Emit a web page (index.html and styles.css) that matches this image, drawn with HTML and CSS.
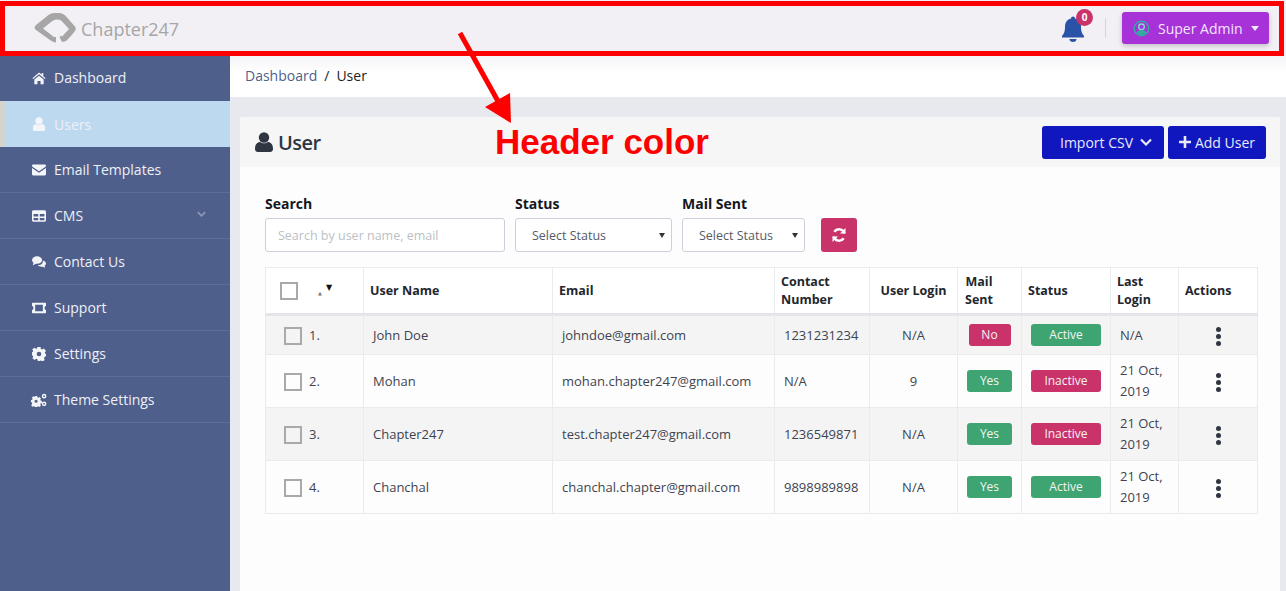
FILE: index.html
```html
<!doctype html>
<html lang="en">
    <head>
        <meta charset="UTF-8" />
        <title>Chapter247 - Users</title>
        <link rel="stylesheet" href="styles.css">
    </head>
    <body>
        <svg class="defs" width="0" height="0">
            <symbol id="i-user" viewBox="0 0 18 20"><circle cx="9" cy="5.5" r="5.2"/><path d="M0 17c0-5 2.5-7 5-7 1.2.8 2.5 1.3 4 1.3s2.800-.5 4-1.300c2.500 0 5 2 5 7 0 2-1.300 3-3 3H3c-1.700 0-3-1-3-3z"/></symbol>
            <symbol id="i-sort" viewBox="0 0 16 16"><path d="M4 15V2M1.500 4.500 4 1.500l2.500 3" class="up"/><path d="M12 1v13M9.500 11.500l2.500 3 2.500-3" class="down"/></symbol>
            <symbol id="i-refresh" viewBox="0 0 16 16"><path d="M13.500 6.500A5.700 5.700 0 0 0 3.300 4.800" fill="none" stroke="currentColor" stroke-width="2.400"/><path d="M14.500 1v5.500H9z"/><path d="M2.500 9.500a5.700 5.700 0 0 0 10.200 1.700" fill="none" stroke="currentColor" stroke-width="2.400"/><path d="M1.500 15V9.500H7z"/></symbol>
        </svg>

        <header class="topbar">
            <div class="logo">
                <svg class="logo-mark" viewBox="0 0 46 36"><path d="M30 31c4 0 6-3 9-6l4-5c1-1.500 1-3 0-4.500l-8-9c-3-3.500-5-4.500-9-4.500h-3c-4 0-6 1.500-9 4l-10 8c-2 2-2 3.500 0 5l14 10c2 1.500 4 2.500 6 2.500v-5.500c-1.500 0-3-.5-4-1.500l-9-7 8-6.500c2-1.500 3.500-2.500 6-2.500 3 0 4.500 1 6.500 3.500l5.500 6-6 6.500c-1 1-1.500 1-2 .5-1-.5-1.500 .5-1 2z"/></svg>
                <span>Chapter247</span>
            </div>
            <div class="top-right">
                <div class="bell">
                    <svg viewBox="0 0 24 27" width="24" height="27"><path d="M12 1.500c1.200 0 2 .8 2 2 4 1 6 4 6 8 0 5 1 7 3 9.500v1.500H1V21c2-2.500 3-4.500 3-9.500 0-4 2-7 6-8 0-1.200.8-2 2-2z"/><path d="M8.500 24h7c0 2-1.500 3-3.500 3s-3.500-1-3.500-3z"/></svg>
                    <span class="bell-count">0</span>
                </div>
                <div class="top-sep"></div>
                <button class="admin-btn">
                    <svg viewBox="0 0 18 18" width="17" height="17"><circle cx="9" cy="9" r="8.400" fill="#2fae9f"/><circle cx="9" cy="9" r="7" fill="#a632d8"/><circle cx="9" cy="7.200" r="3" fill="none" stroke="#7fe3cf" stroke-width="1.400"/><path d="M3.500 14c1-2.800 3-3.500 5.500-3.500s4.500.7 5.500 3.500L9 16.500z" fill="#2fae9f"/></svg>
                    <span>Super Admin</span>
                    <i class="caret"></i>
                </button>
            </div>
        </header>

        <div class="layout">
            <nav class="sidebar">
                <a class="nav-item">
                    <svg class="nav-icon" viewBox="0 0 18 16"><path d="M9 1 0.500 8.200l1 1.200L9 3.200l7.500 6.200 1-1.200-3-2.500V1.500h-2v2.100z"/><path d="M3 10 9 5l6 5v6h-4v-4H7v4H3z"/></svg>
                    Dashboard
                </a>
                <a class="nav-item active">
                    <svg class="nav-icon" viewBox="0 0 18 20"><use href="#i-user"/></svg>
                    Users
                </a>
                <a class="nav-item">
                    <svg class="nav-icon" viewBox="0 0 18 14"><path d="M1.500 0h15C17.300 0 18 .7 18 1.500c0 .8-.5 1.300-1 1.700L9 8.500 1 3.200C.5 2.800 0 2.300 0 1.500 0 .7.700 0 1.500 0z"/><path d="M0 4.500 9 10.500l9-6V12.500c0 .8-.7 1.500-1.500 1.500h-15C.7 14 0 13.300 0 12.500z"/></svg>
                    Email Templates
                </a>
                <a class="nav-item">
                    <svg class="nav-icon" viewBox="0 0 18 15"><path fill-rule="evenodd" d="M2 0h14c1.100 0 2 .9 2 2v11c0 1.100-.9 2-2 2H2c-1.100 0-2-.9-2-2V2C0 .9.900 0 2 0zM2 5v3h6V5zm8 0v3h6V5zM2 10v3h6v-3zm8 0v3h6v-3z"/></svg>
                    CMS
                    <svg class="nav-chevron" viewBox="0 0 10 6"><path d="M1 1l4 4 4-4" fill="none" stroke="currentColor" stroke-width="2"/></svg>
                </a>
                <a class="nav-item">
                    <svg class="nav-icon" viewBox="0 0 18 15"><ellipse cx="6.500" cy="5" rx="6.500" ry="4.800"/><path d="M2 8 1 12l5-3z"/><path d="M14 5.500c2.500.8 4 2.300 4 4 0 1.200-.7 2.300-1.800 3l.8 2.500-3.500-1.500c-2.500.3-5-.5-6-2 4 0 7-2 6.500-6z"/></svg>
                    Contact Us
                </a>
                <a class="nav-item">
                    <svg class="nav-icon" viewBox="0 0 20 15"><path fill-rule="evenodd" d="M1 0h18c.6 0 1 .4 1 1v3.500c-1.200 0-2 1.300-2 3s.8 3 2 3V14c0 .6-.4 1-1 1H1c-.6 0-1-.4-1-1v-3.500c1.200 0 2-1.300 2-3s-.8-3-2-3V1c0-.6.400-1 1-1zm3.500 3v9h11V3z"/></svg>
                    Support
                </a>
                <a class="nav-item">
                    <svg class="nav-icon" viewBox="0 0 18 18"><path fill-rule="evenodd" d="M7 0h4l.5 2.600 1.600.7L15.400 2l2.600 3-1.600 2 .4 1.400 1.200.6v3l-2 .9-.6 1.500 1 2.200-3 2-1.800-1.400-1.600.5L10.500 18h-3l-.6-2.300-1.600-.5L3.500 16.600l-3-2 1-2.200-.6-1.500-1.900-.9V7l2-.6.400-1.400L.400 3 3 1l2.200 1.300 1.300-.7zM9 6a3 3 0 1 0 0 6 3 3 0 0 0 0-6z"/></svg>
                    Settings
                </a>
                <a class="nav-item">
                    <svg class="nav-icon wide" viewBox="0 0 22 17"><path fill-rule="evenodd" d="M5.500 3h3l.4 1.700 1.300.6 1.600-.8 1.900 2-1 1.500.5 1.300 1.800.5v3l-1.800.4-.5 1.300 1 1.500-1.900 2-1.600-.9-1.300.5-.4 1.400h-3l-.4-1.500-1.300-.5-1.600.9-2-2 1-1.500L1.700 12 0 11.600v-3l1.700-.5.500-1.300-1-1.500 2-2 1.600.8 1.300-.6zM7 8a2.200 2.200 0 1 0 0 4.400A2.200 2.200 0 0 0 7 8z"/><path fill-rule="evenodd" d="M18 0a3.200 3.200 0 1 1 0 6.400A3.200 3.200 0 0 1 18 0zm0 2a1.200 1.200 0 1 0 0 2.400A1.200 1.200 0 0 0 18 2zM18 10.600a3.200 3.200 0 1 1 0 6.400 3.200 3.200 0 0 1 0-6.400zm0 2a1.200 1.200 0 1 0 0 2.400 1.200 1.200 0 0 0 0-2.400z"/></svg>
                    Theme Settings
                </a>
            </nav>

            <main class="content">
                <div class="breadcrumb">
                    <a>Dashboard</a>
                    <span class="crumb-sep">/</span>
                    <span>User</span>
                </div>

                <section class="card">
                    <div class="card-head">
                        <h2 class="card-title">
                            <svg viewBox="0 0 18 20" width="18" height="20"><use href="#i-user"/></svg>
                            User
                        </h2>
                        <div class="card-actions">
                            <button class="btn-blue import-btn">
                                Import CSV
                                <svg viewBox="0 0 12 8" width="12" height="8"><path d="M1 1.500l5 5 5-5" fill="none" stroke="currentColor" stroke-width="2.200"/></svg>
                            </button>
                            <button class="btn-blue add-btn">
                                <svg viewBox="0 0 12 12" width="12" height="12"><path d="M6 0v12M0 6h12" stroke="currentColor" stroke-width="2.600"/></svg>
                                Add User
                            </button>
                        </div>
                    </div>

                    <div class="card-body">
                        <div class="filters">
                            <div class="field field-search">
                                <label>Search</label>
                                <input type="text" placeholder="Search by user name, email">
                            </div>
                            <div class="field field-status">
                                <label>Status</label>
                                <div class="select">Select Status</div>
                            </div>
                            <div class="field field-mail">
                                <label>Mail Sent</label>
                                <div class="select">Select Status</div>
                            </div>
                            <button class="refresh-btn">
                                <svg viewBox="0 0 16 16" width="16" height="16"><use href="#i-refresh"/></svg>
                            </button>
                        </div>

                        <table class="users">
                            <colgroup>
                                <col class="c-check"><col class="c-name"><col class="c-email"><col class="c-phone"><col class="c-login"><col class="c-mail"><col class="c-status"><col class="c-last"><col class="c-actions">
                            </colgroup>
                            <thead>
                                <tr>
                                    <th class="th-check"><span class="checkbox"></span><span class="sort-a">▲</span><span class="sort-b">▼</span></th>
                                    <th><div class="th-in">User Name<svg class="sort warm"><use href="#i-sort"/></svg></div></th>
                                    <th><div class="th-in">Email<svg class="sort warm"><use href="#i-sort"/></svg></div></th>
                                    <th><div class="th-in">Contact Number<svg class="sort cool"><use href="#i-sort"/></svg></div></th>
                                    <th class="th-center">User Login</th>
                                    <th><div class="th-in th-mail"><span>Mail Sent</span><svg class="sort cool"><use href="#i-sort"/></svg></div></th>
                                    <th><div class="th-in">Status<svg class="sort warm"><use href="#i-sort"/></svg></div></th>
                                    <th><div class="th-in">Last Login<svg class="sort warm"><use href="#i-sort"/></svg></div></th>
                                    <th>Actions</th>
                                </tr>
                            </thead>
                            <tbody>
                                <tr class="row-short">
                                    <td class="td-check"><span class="checkbox"></span><span>1.</span></td>
                                    <td class="td-pad">John Doe</td>
                                    <td class="td-pad">johndoe@gmail.com</td>
                                    <td class="td-pad">1231231234</td>
                                    <td class="td-center">N/A</td>
                                    <td class="td-center"><span class="tag tag-red tag-mail">No</span></td>
                                    <td class="td-center"><span class="tag tag-green tag-status">Active</span></td>
                                    <td class="td-last">N/A</td>
                                    <td class="td-center"><span class="dots"><i></i><i></i><i></i></span></td>
                                </tr>
                                <tr>
                                    <td class="td-check"><span class="checkbox"></span><span>2.</span></td>
                                    <td class="td-pad">Mohan</td>
                                    <td class="td-pad">mohan.chapter247@gmail.com</td>
                                    <td class="td-pad">N/A</td>
                                    <td class="td-center">9</td>
                                    <td class="td-center"><span class="tag tag-green tag-mail">Yes</span></td>
                                    <td class="td-center"><span class="tag tag-red tag-status">Inactive</span></td>
                                    <td class="td-last">21 Oct, 2019</td>
                                    <td class="td-center"><span class="dots"><i></i><i></i><i></i></span></td>
                                </tr>
                                <tr>
                                    <td class="td-check"><span class="checkbox"></span><span>3.</span></td>
                                    <td class="td-pad">Chapter247</td>
                                    <td class="td-pad">test.chapter247@gmail.com</td>
                                    <td class="td-pad">1236549871</td>
                                    <td class="td-center">N/A</td>
                                    <td class="td-center"><span class="tag tag-green tag-mail">Yes</span></td>
                                    <td class="td-center"><span class="tag tag-red tag-status">Inactive</span></td>
                                    <td class="td-last">21 Oct, 2019</td>
                                    <td class="td-center"><span class="dots"><i></i><i></i><i></i></span></td>
                                </tr>
                                <tr>
                                    <td class="td-check"><span class="checkbox"></span><span>4.</span></td>
                                    <td class="td-pad">Chanchal</td>
                                    <td class="td-pad">chanchal.chapter@gmail.com</td>
                                    <td class="td-pad">9898989898</td>
                                    <td class="td-center">N/A</td>
                                    <td class="td-center"><span class="tag tag-green tag-mail">Yes</span></td>
                                    <td class="td-center"><span class="tag tag-green tag-status">Active</span></td>
                                    <td class="td-last">21 Oct, 2019</td>
                                    <td class="td-center"><span class="dots"><i></i><i></i><i></i></span></td>
                                </tr>
                            </tbody>
                        </table>
                    </div>
                </section>
            </main>
        </div>

        <!-- red markup drawn on top of the screenshot -->
        <div class="mark-box"></div>
        <svg class="mark-arrow" viewBox="0 0 70 100" width="70" height="100"><path d="M3 2 42 72" stroke="#ff0000" stroke-width="5"/><path d="M53 62 54 92 28 76z" fill="#ff0000"/></svg>
        <div class="mark-text">Header color</div>
    </body>
</html>
```

FILE: styles.css
```css
:root {
    --side-blue: #4e5f8c;
    --side-line: #5d6d98;
    --brand-blue: #1017bf;
    --tag-red: #c9336a;
    --tag-green: #3ea572;
    --line: #e9ebef;
    --text: #3d4450;
}

* {
    margin: 0;
    padding: 0;
    box-sizing: border-box;
}

html, body {
    height: 100%;
    overflow: hidden;
}

body {
    position: relative;
    display: flex;
    flex-direction: column;
    font-family: "Open Sans", sans-serif;
    font-size: 14px;
    color: var(--text);
    background: #e8e9ee;
}

button {
    font-family: inherit;
    border: 0;
}

.defs {
    position: absolute;
}

/* top bar */
.topbar {
    flex: 0 0 56px;
    display: flex;
    align-items: center;
    justify-content: space-between;
    padding: 0 17px 0 32px;
    background: #f2f0f5;
}

.logo {
    display: flex;
    align-items: center;
    gap: 3px;
    font-size: 18px;
    color: #a6a6a6;
    margin-top: 1px;
}

.logo-mark {
    width: 46px;
    height: 36px;
    fill: #a6a6a6;
}

.top-right {
    display: flex;
    align-items: center;
}

.bell {
    position: relative;
    width: 24px;
    height: 27px;
    margin-right: 20px;
    fill: #2a53a8;
}

.bell-count {
    position: absolute;
    top: -6px;
    left: 15px;
    width: 17px;
    height: 17px;
    border-radius: 50%;
    background: var(--tag-red);
    color: #fff;
    font-size: 10px;
    font-weight: 700;
    line-height: 17px;
    text-align: center;
}

.top-sep {
    width: 1px;
    height: 20px;
    background: #d5d5d8;
    margin-right: 16px;
}

.admin-btn {
    display: flex;
    align-items: center;
    width: 147px;
    height: 32px;
    padding: 0 10px 0 11px;
    border-radius: 3px;
    background: #a632d8;
    color: #f3e6fb;
    font-size: 14px;
    box-shadow: 0 2px 5px rgba(0, 0, 0, 0.2);
}

.admin-btn span {
    margin-left: 8px;
}

.caret {
    margin-left: 8px;
    border-left: 4.5px solid transparent;
    border-right: 4.5px solid transparent;
    border-top: 5px solid #f3e6fb;
}

.layout {
    flex: 1;
    display: flex;
    min-height: 0;
}

/* sidebar */
.sidebar {
    flex: 0 0 230px;
    background: var(--side-blue);
}

.nav-item {
    display: flex;
    align-items: center;
    height: 46px;
    padding-left: 32px;
    border-bottom: 1px solid var(--side-line);
    color: #eef0f6;
    font-size: 14px;
}

.nav-item:nth-child(1),
.nav-item:nth-child(2) {
    border-bottom: 0;
}

.nav-item:nth-child(1) {
    height: 45px;
    padding-bottom: 2px;
}

.nav-item.active {
    padding-left: 27px;
    border-left: 5px solid #d4d3d0;
    background: #bdd9f0;
}

.nav-icon {
    flex: 0 0 auto;
    width: 14px;
    height: 14px;
    margin-right: 8px;
    fill: #f4f5f8;
}

.nav-icon.wide {
    width: 16px;
    margin-left: -1px;
    margin-right: 7px;
}

.nav-chevron {
    width: 9px;
    height: 6px;
    margin-left: auto;
    margin-right: 24px;
    margin-top: -4px;
    color: #8c98b8;
}

/* main area */
.content {
    flex: 1;
    display: flex;
    flex-direction: column;
    min-width: 0;
}

.breadcrumb {
    flex: 0 0 41px;
    display: flex;
    align-items: center;
    gap: 7px;
    padding: 0 15px 2px;
    background: linear-gradient(#f4f4f7, #ffffff 40%);
    color: #1d1d24;
}

.breadcrumb a {
    color: #4e5f8c;
}

.card {
    flex: 1;
    margin: 20px 6px 0 10px;
    border-radius: 3px 3px 0 0;
    background: #fdfdfd;
}

.card-head {
    display: flex;
    align-items: center;
    justify-content: space-between;
    height: 50px;
    padding: 0 14px 0 15px;
    background: #f6f6f6;
    border-radius: 3px 3px 0 0;
}

.card-title {
    display: flex;
    align-items: center;
    gap: 5px;
    font-size: 20px;
    font-weight: 600;
    color: #2f3642;
    letter-spacing: -0.5px;
}

.card-title svg {
    fill: #2f3642;
}

.card-actions {
    display: flex;
    gap: 4px;
}

.btn-blue {
    display: flex;
    align-items: center;
    justify-content: center;
    height: 33px;
    border-radius: 3px;
    background: var(--brand-blue);
    color: #e8e9fb;
    font-size: 14px;
}

.import-btn {
    width: 122px;
    gap: 7px;
    padding-left: 6px;
}

.add-btn {
    width: 98px;
    gap: 4px;
}

.card-body {
    padding: 27px 24px 0 25px;
}

/* filters */
.filters {
    display: flex;
    align-items: flex-end;
    gap: 10px;
    margin-bottom: 15px;
}

.field label {
    display: block;
    margin-bottom: 5px;
    font-weight: 700;
    line-height: 19px;
    color: #15171c;
}

.field input,
.select {
    height: 34px;
    border: 1px solid #ccd0da;
    border-radius: 3px;
    background: #fff;
    font-family: inherit;
    font-size: 12.5px;
}

.field input {
    width: 240px;
    padding: 0 12px;
}

.field input::placeholder {
    color: #bbbfc6;
}

.select {
    position: relative;
    display: flex;
    align-items: center;
    padding-left: 16px;
    color: #555b66;
}

.select::after {
    content: "";
    position: absolute;
    right: 6px;
    top: 14px;
    border-left: 3.5px solid transparent;
    border-right: 3.5px solid transparent;
    border-top: 5px solid #333;
}

.field-status .select {
    width: 157px;
}

.field-mail {
    margin-left: 0;
}

.field-mail .select {
    width: 123px;
}

.refresh-btn {
    display: flex;
    align-items: center;
    justify-content: center;
    width: 36px;
    height: 34px;
    margin-left: 6px;
    border-radius: 3px;
    background: var(--tag-red);
    color: #fff;
    fill: #fff;
}

/* table */
.users {
    table-layout: fixed;
    width: 992px;
    border-collapse: collapse;
    font-size: 13px;
}

.c-check { width: 98px; }
.c-name { width: 189px; }
.c-email { width: 222px; }
.c-phone { width: 95px; }
.c-login { width: 88px; }
.c-mail { width: 64px; }
.c-status { width: 89px; }
.c-last { width: 68px; }
.c-actions { width: 79px; }

.users th,
.users td {
    border: 1px solid var(--line);
}

.users th {
    height: 47px;
    padding: 0 6px;
    border-bottom: 3px solid #e3e5ea;
    background: #fff;
    font-size: 12.5px;
    font-weight: 700;
    line-height: 18px;
    text-align: left;
    color: #22262d;
}

.th-in {
    display: flex;
    align-items: center;
    justify-content: space-between;
    gap: 2px;
    padding-left: 0;
}

.th-mail span {
    text-align: center;
    width: 30px;
}

.th-center {
    text-align: center !important;
}

.th-check {
    position: relative;
}

.th-check .checkbox {
    position: absolute;
    left: 14px;
    top: 14px;
    width: 18px;
    height: 18px;
}

.sort-a,
.sort-b {
    position: absolute;
    top: 15px;
    font-size: 8px;
    line-height: 10px;
    color: #111;
    font-family: "DejaVu Sans", sans-serif;
}

.sort-a {
    left: 52px;
    top: 20px;
    font-size: 5px;
    color: #777;
}

.sort-b {
    left: 60px;
}

.sort {
    flex: 0 0 16px;
    width: 16px;
    height: 16px;
    margin-right: 2px;
    fill: none;
    stroke-width: 1.300;
}

.sort.warm .up {
    stroke: #d9750f;
}

.sort.warm .down {
    stroke: #a8281c;
}

.sort.cool .up {
    stroke: #1583a8;
}

.sort.cool .down {
    stroke: #14466f;
}

.users tbody tr {
    height: 53px;
    background: #fdfdfd;
}

.users tbody tr.row-short {
    height: 40px;
}

.users tbody tr:nth-child(odd) {
    background: #f4f4f5;
}

.users td {
    line-height: 21px;
    vertical-align: middle;
}

.td-pad {
    padding-left: 9px;
}

.td-last {
    padding: 0 6px 0 9px;
}

.td-center {
    text-align: center;
}

.td-check {
    padding-left: 18px;
}

.td-check span:last-child {
    margin-left: 7px;
    vertical-align: middle;
}

.checkbox {
    display: inline-block;
    width: 18px;
    height: 18px;
    border: 2px solid #a9a9a9;
    background: transparent;
    vertical-align: middle;
}

.tag {
    display: inline-block;
    height: 22px;
    border-radius: 3px;
    color: #f4f4f4;
    font-size: 12px;
    line-height: 21px;
    text-align: center;
    vertical-align: middle;
}

.tag-mail {
    width: 42px;
}

.tag-mail.tag-green {
    width: 45px;
}

.tag-status {
    width: 70px;
}

.tag-red {
    background: var(--tag-red);
}

.tag-green {
    background: var(--tag-green);
}

.dots {
    display: inline-flex;
    flex-direction: column;
    gap: 2px;
    vertical-align: middle;
}

.dots i {
    width: 5px;
    height: 5px;
    border-radius: 50%;
    background: #2f3642;
}

/* red markup */
.mark-box {
    position: absolute;
    left: 0;
    top: 1px;
    width: 1284px;
    height: 55px;
    border: 5px solid #ff0000;
}

.mark-arrow {
    position: absolute;
    left: 457px;
    top: 31px;
}

.mark-text {
    position: absolute;
    left: 495px;
    top: 122px;
    font-family: "Liberation Sans", sans-serif;
    font-size: 35px;
    font-weight: 700;
    line-height: 40px;
    color: #ff0000;
}
```
